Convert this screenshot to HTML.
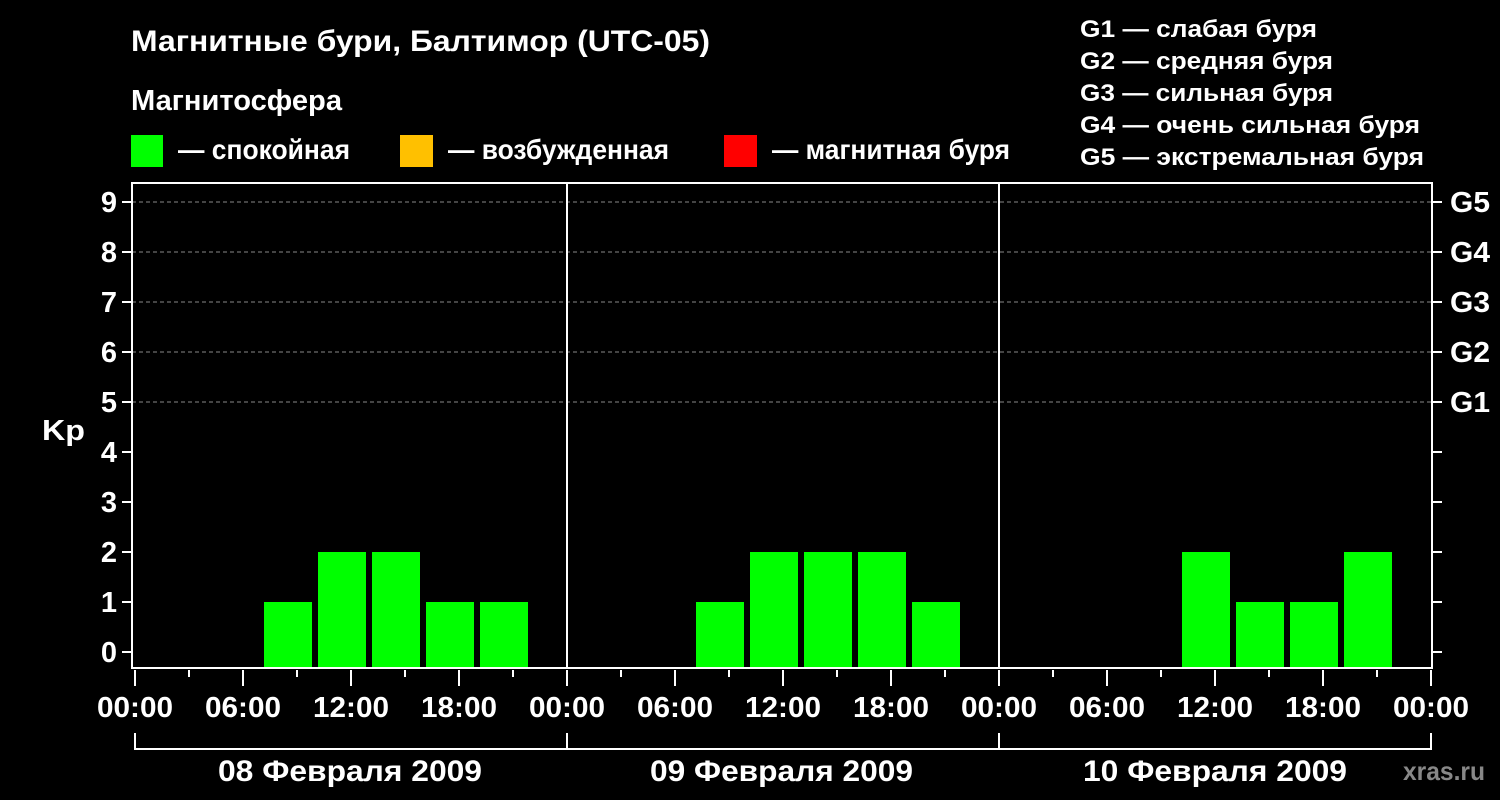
<!DOCTYPE html>
<html><head><meta charset="utf-8"><style>
html,body{margin:0;padding:0;background:#000;width:1500px;height:800px;overflow:hidden}
text{font-family:"Liberation Sans",sans-serif;font-weight:bold;fill:#fff}
</style></head><body>
<svg width="1500" height="800" viewBox="0 0 1500 800" xmlns="http://www.w3.org/2000/svg">
<rect width="1500" height="800" fill="#000"/>
<text x="131" y="51" font-size="30" textLength="579" lengthAdjust="spacingAndGlyphs">Магнитные бури, Балтимор (UTC-05)</text>
<text x="131" y="110" font-size="29" textLength="211" lengthAdjust="spacingAndGlyphs">Магнитосфера</text>
<rect x="131" y="135" width="32" height="32" fill="#00ff00"/>
<text x="178" y="159" font-size="28" textLength="172" lengthAdjust="spacingAndGlyphs">— спокойная</text>
<rect x="400" y="135" width="33" height="32" fill="#ffc000"/>
<text x="448" y="159" font-size="28" textLength="221" lengthAdjust="spacingAndGlyphs">— возбужденная</text>
<rect x="724" y="135" width="33" height="32" fill="#ff0000"/>
<text x="772" y="159" font-size="28" textLength="238" lengthAdjust="spacingAndGlyphs">— магнитная буря</text>
<g font-size="24">
<text x="1080" y="37" textLength="237" lengthAdjust="spacingAndGlyphs">G1 — слабая буря</text>
<text x="1080" y="69" textLength="253" lengthAdjust="spacingAndGlyphs">G2 — средняя буря</text>
<text x="1080" y="101" textLength="253" lengthAdjust="spacingAndGlyphs">G3 — сильная буря</text>
<text x="1080" y="133" textLength="340" lengthAdjust="spacingAndGlyphs">G4 — очень сильная буря</text>
<text x="1080" y="165" textLength="344" lengthAdjust="spacingAndGlyphs">G5 — экстремальная буря</text>
</g>
<g stroke="#888" stroke-width="1" stroke-dasharray="4,3">
<line x1="132" y1="202" x2="1432" y2="202"/>
<line x1="132" y1="252" x2="1432" y2="252"/>
<line x1="132" y1="302" x2="1432" y2="302"/>
<line x1="132" y1="352" x2="1432" y2="352"/>
<line x1="132" y1="402" x2="1432" y2="402"/>
</g>
<g fill="#00ff00">
<rect x="264" y="602" width="48" height="66"/>
<rect x="318" y="552" width="48" height="116"/>
<rect x="372" y="552" width="48" height="116"/>
<rect x="426" y="602" width="48" height="66"/>
<rect x="480" y="602" width="48" height="66"/>
<rect x="696" y="602" width="48" height="66"/>
<rect x="750" y="552" width="48" height="116"/>
<rect x="804" y="552" width="48" height="116"/>
<rect x="858" y="552" width="48" height="116"/>
<rect x="912" y="602" width="48" height="66"/>
<rect x="1182" y="552" width="48" height="116"/>
<rect x="1236" y="602" width="48" height="66"/>
<rect x="1290" y="602" width="48" height="66"/>
<rect x="1344" y="552" width="48" height="116"/>
</g>
<g stroke="#fff" stroke-width="2" fill="none">
<rect x="132" y="183" width="1300" height="485"/>
<line x1="567" y1="183" x2="567" y2="668"/>
<line x1="999" y1="183" x2="999" y2="668"/>
<path d="M122 202H132M122 252H132M122 302H132M122 352H132M122 402H132M122 452H132M122 502H132M122 552H132M122 602H132M122 652H132"/>
<path d="M1432 202H1442M1432 252H1442M1432 302H1442M1432 352H1442M1432 402H1442M1432 452H1442M1432 502H1442M1432 552H1442M1432 602H1442M1432 652H1442"/>
<path d="M135 670V686M189 670V677M243 670V686M297 670V677M351 670V686M405 670V677M459 670V686M513 670V677M567 670V686
M621 670V677M675 670V686M729 670V677M783 670V686M837 670V677M891 670V686M945 670V677M999 670V686
M1053 670V677M1107 670V686M1161 670V677M1215 670V686M1269 670V677M1323 670V686M1377 670V677M1431 670V686"/>
<path d="M135 733V749H567M567 733V749H999M999 733V749H1431V733"/>
</g>
<g font-size="29" text-anchor="end">
<text x="117" y="212">9</text><text x="117" y="262">8</text><text x="117" y="312">7</text>
<text x="117" y="362">6</text><text x="117" y="412">5</text><text x="117" y="462">4</text>
<text x="117" y="512">3</text><text x="117" y="562">2</text><text x="117" y="612">1</text>
<text x="117" y="662">0</text>
</g>
<text x="42" y="440" font-size="29" textLength="43" lengthAdjust="spacingAndGlyphs">Kp</text>
<g font-size="29">
<text x="1450" y="212" textLength="40" lengthAdjust="spacingAndGlyphs">G5</text>
<text x="1450" y="262" textLength="40" lengthAdjust="spacingAndGlyphs">G4</text>
<text x="1450" y="312" textLength="40" lengthAdjust="spacingAndGlyphs">G3</text>
<text x="1450" y="362" textLength="40" lengthAdjust="spacingAndGlyphs">G2</text>
<text x="1450" y="412" textLength="40" lengthAdjust="spacingAndGlyphs">G1</text>
</g>
<g font-size="29">
<text x="97" y="717" textLength="76" lengthAdjust="spacingAndGlyphs">00:00</text>
<text x="205" y="717" textLength="76" lengthAdjust="spacingAndGlyphs">06:00</text>
<text x="313" y="717" textLength="76" lengthAdjust="spacingAndGlyphs">12:00</text>
<text x="421" y="717" textLength="76" lengthAdjust="spacingAndGlyphs">18:00</text>
<text x="529" y="717" textLength="76" lengthAdjust="spacingAndGlyphs">00:00</text>
<text x="637" y="717" textLength="76" lengthAdjust="spacingAndGlyphs">06:00</text>
<text x="745" y="717" textLength="76" lengthAdjust="spacingAndGlyphs">12:00</text>
<text x="853" y="717" textLength="76" lengthAdjust="spacingAndGlyphs">18:00</text>
<text x="961" y="717" textLength="76" lengthAdjust="spacingAndGlyphs">00:00</text>
<text x="1069" y="717" textLength="76" lengthAdjust="spacingAndGlyphs">06:00</text>
<text x="1177" y="717" textLength="76" lengthAdjust="spacingAndGlyphs">12:00</text>
<text x="1285" y="717" textLength="76" lengthAdjust="spacingAndGlyphs">18:00</text>
<text x="1393" y="717" textLength="76" lengthAdjust="spacingAndGlyphs">00:00</text>
</g>
<g font-size="30">
<text x="218" y="781" textLength="264" lengthAdjust="spacingAndGlyphs">08 Февраля 2009</text>
<text x="650" y="781" textLength="263" lengthAdjust="spacingAndGlyphs">09 Февраля 2009</text>
<text x="1083" y="781" textLength="264" lengthAdjust="spacingAndGlyphs">10 Февраля 2009</text>
</g>
<text x="1403" y="780" font-size="26" style="fill:#888" textLength="82" lengthAdjust="spacingAndGlyphs">xras.ru</text>
</svg>
</body></html>
